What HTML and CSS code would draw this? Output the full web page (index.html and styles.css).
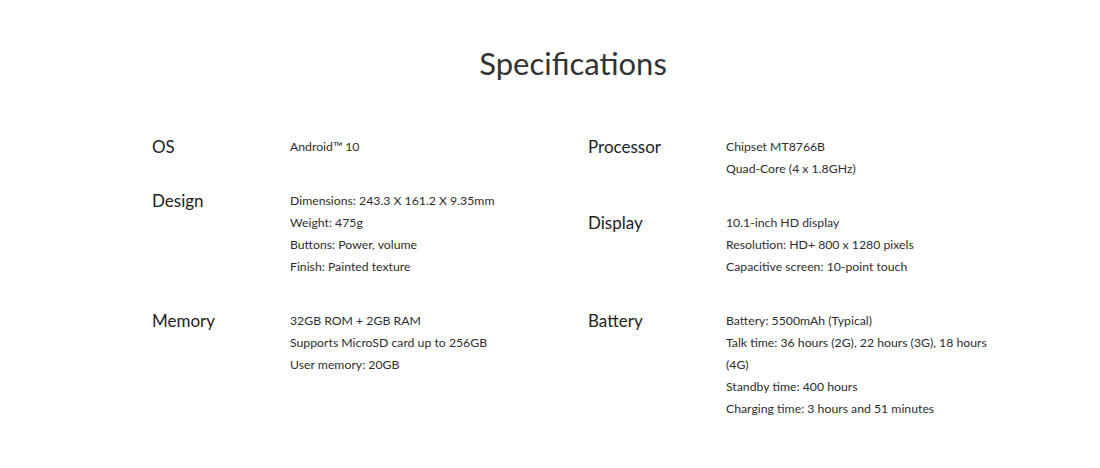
FILE: index.html
```html
<!DOCTYPE html>
<html>
<head>
<meta charset="utf-8">
<link rel="stylesheet" href="styles.css">
</head>
<body>
<section class="specs">
  <h2 class="specs-title">Specifications</h2>
  <div class="specs-grid">
    <div class="specs-col">
      <div class="spec-row">
        <div class="spec-label">OS</div>
        <div class="spec-values"><p>Android™ 10</p></div>
      </div>
      <div class="spec-row">
        <div class="spec-label">Design</div>
        <div class="spec-values">
          <p>Dimensions: 243.3 X 161.2 X 9.35mm</p>
          <p>Weight: 475g</p>
          <p>Buttons: Power, volume</p>
          <p>Finish: Painted texture</p>
        </div>
      </div>
      <div class="spec-row">
        <div class="spec-label">Memory</div>
        <div class="spec-values">
          <p>32GB ROM + 2GB RAM</p>
          <p>Supports MicroSD card up to 256GB</p>
          <p>User memory: 20GB</p>
        </div>
      </div>
    </div>
    <div class="specs-col">
      <div class="spec-row">
        <div class="spec-label">Processor</div>
        <div class="spec-values">
          <p>Chipset MT8766B</p>
          <p>Quad-Core (4 x 1.8GHz)</p>
        </div>
      </div>
      <div class="spec-row">
        <div class="spec-label">Display</div>
        <div class="spec-values">
          <p>10.1-inch HD display</p>
          <p>Resolution: HD+ 800 x 1280 pixels</p>
          <p>Capacitive screen: 10-point touch</p>
        </div>
      </div>
      <div class="spec-row">
        <div class="spec-label">Battery</div>
        <div class="spec-values">
          <p>Battery: 5500mAh (Typical)</p>
          <p>Talk time: 36 hours (2G), 22 hours (3G), 18 hours (4G)</p>
          <p>Standby time: 400 hours</p>
          <p>Charging time: 3 hours and 51 minutes</p>
        </div>
      </div>
    </div>
  </div>
</section>
</body>
</html>
```

FILE: styles.css
```css
html, body {
  margin: 0;
  padding: 0;
  background: #ffffff;
}
body {
  font-family: Lato, "Liberation Sans", sans-serif;
  color: #333333;
}
.specs {
  width: 798px;
  margin: 0 auto;
  padding-left: 2px;
  padding-top: 44px;
}
.specs-title {
  margin: 0 0 54px 0;
  padding-left: 44px;
  text-align: center;
  font-size: 31px;
  font-weight: 400;
  line-height: 38px;
  color: #333333;
}
.specs-grid {
  display: grid;
  grid-template-columns: 398px 398px;
  column-gap: 38px;
}
.spec-row {
  display: flex;
  margin-bottom: 32px;
}
.spec-label {
  width: 138px;
  flex: none;
  font-size: 17px;
  line-height: 22px;
  color: #222222;
}
.spec-values {
  width: 285px;
  flex: none;
  font-size: 12.25px;
  line-height: 22px;
  color: #2e2e2e;
}
.spec-values p {
  margin: 0;
}
```
